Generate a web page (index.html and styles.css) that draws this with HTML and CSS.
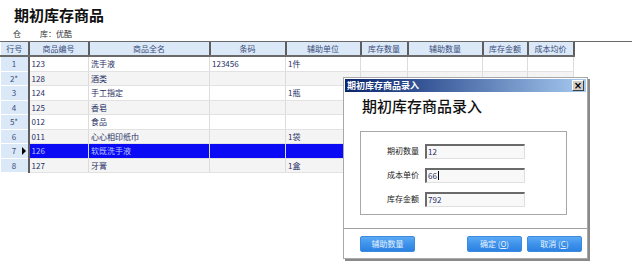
FILE: index.html
```html
<!DOCTYPE html>
<html>
<head>
<meta charset="utf-8">
<link rel="stylesheet" href="styles.css">
</head>
<body>
<div class="page">
  <h1 class="title">期初库存商品</h1>
  <div class="warehouse"><span class="wh-a">仓</span><span>库：优酷</span></div>
  <div class="grid-wrap">
    <table class="grid">
      <colgroup>
        <col style="width:28px"><col style="width:60px"><col style="width:121px"><col style="width:76px"><col style="width:75px"><col style="width:47px"><col style="width:75px"><col style="width:45px"><col style="width:46px">
      </colgroup>
      <thead>
        <tr><th>行号</th><th>商品编号</th><th>商品全名</th><th>条码</th><th>辅助单位</th><th>库存数量</th><th>辅助数量</th><th>库存金额</th><th>成本均价</th></tr>
      </thead>
      <tbody>
        <tr><td class="rn">1</td><td>123</td><td>洗手液</td><td>123456</td><td>1件</td><td></td><td></td><td></td><td></td></tr>
        <tr class="alt"><td class="rn">2*</td><td>128</td><td>酒类</td><td></td><td></td><td></td><td></td><td></td><td></td></tr>
        <tr><td class="rn">3</td><td>124</td><td>手工指定</td><td></td><td>1瓶</td><td></td><td></td><td></td><td></td></tr>
        <tr class="alt"><td class="rn">4</td><td>125</td><td>香皂</td><td></td><td></td><td></td><td></td><td></td><td></td></tr>
        <tr><td class="rn">5*</td><td>012</td><td>食品</td><td></td><td></td><td></td><td></td><td></td><td></td></tr>
        <tr class="alt"><td class="rn">6</td><td>011</td><td>心心相印纸巾</td><td></td><td>1袋</td><td></td><td></td><td></td><td></td></tr>
        <tr class="sel"><td class="rn"><span class="rn-num">7</span><span class="arrow"></span></td><td>126</td><td>软既洗手液</td><td></td><td></td><td></td><td></td><td></td><td></td></tr>
        <tr class="alt"><td class="rn">8</td><td>127</td><td>牙膏</td><td></td><td>1盒</td><td></td><td></td><td></td><td></td></tr>
      </tbody>
    </table>
  </div>
</div>

<div class="dialog">
  <div class="titlebar">
    <span class="tb-text">期初库存商品录入</span>
    <span class="close">×</span>
  </div>
  <div class="dlg-heading">期初库存商品录入</div>
  <div class="group">
    <div class="field"><label>期初数量</label><div class="input">12</div></div>
    <div class="field"><label>成本单价</label><div class="input">66<span class="caret"></span></div></div>
    <div class="field"><label>库存金额</label><div class="input">792</div></div>
  </div>
  <div class="sep"></div>
  <div class="footer">
    <button class="btn">辅助数量</button>
    <div class="right-btns">
      <button class="btn">确定 (<u>O</u>)</button>
      <button class="btn">取消 (<u>C</u>)</button>
    </div>
  </div>
</div>
</body>
</html>
```

FILE: styles.css
```css
html, body {
  margin: 0;
  padding: 0;
  background: #ffffff;
}
body {
  width: 632px;
  height: 272px;
  overflow: hidden;
  position: relative;
  font-family: "Noto Sans CJK SC", "Noto Sans", sans-serif;
  color: #1a1a1a;
}
.page {
  padding-top: 6px;
}
.title {
  margin: 0 0 0 14px;
  font-size: 15px;
  line-height: 17px;
  font-weight: bold;
  color: #111;
}
.warehouse {
  margin: 6px 0 0 13px;
  font-size: 8px;
  line-height: 10px;
  color: #333;
  display: flex;
}
.wh-a {
  width: 27px;
}
.grid-wrap {
  margin-top: 2px;
  border-top: 1px solid #6a6a6a;
}
.grid {
  border-collapse: collapse;
  table-layout: fixed;
  width: 573px;
  font-size: 8px;
}
.grid th {
  height: 13px;
  padding: 0;
  background: #dbe8f8;
  color: #3a4d78;
  font-weight: normal;
  text-align: center;
  border-right: 2px solid #5e5e5e;
  border-bottom: 2px solid #6a6a6a;
  border-left: 1px solid #ffffff;
  line-height: 13px;
  white-space: nowrap;
}
.grid td {
  height: 13.5px;
  padding: 0 0 0 2px;
  color: #1f2f63;
  border-right: 1px solid #dcdcdc;
  border-bottom: 1px solid #e2e2e2;
  white-space: nowrap;
  overflow: hidden;
  line-height: 13px;
  background: #ffffff;
}
.grid tr.alt td {
  background: #f4f4f4;
}
.grid td.rn {
  background: #dbe8f8;
  color: #3a4d78;
  text-align: center;
  padding: 0;
  border-right: 2px solid #5e5e5e;
  border-bottom: 1px solid #ffffff;
  position: relative;
}
.grid tr.alt td.rn {
  background: #dbe8f8;
}
.grid tr.sel td {
  background: #0a0af5;
  color: #b8c4ff;
}
.grid tr.sel td.rn {
  background: #dbe8f8;
  color: #3a4d78;
}
.arrow {
  position: absolute;
  right: 2px;
  top: 3px;
  width: 0;
  height: 0;
  border-top: 4px solid transparent;
  border-bottom: 4px solid transparent;
  border-left: 4px solid #000;
}

/* Dialog */
.dialog {
  position: absolute;
  left: 343px;
  top: 77px;
  width: 243px;
  height: 180px;
  background: #ffffff;
  border: 1px solid #a8a8a8;
  box-shadow: 2px 2px 0 #8a8a8a;
  display: flex;
  flex-direction: column;
}
.titlebar {
  margin: 1px 1px 0 1px;
  height: 13px;
  background: linear-gradient(to right, #0a246a 0%, #3a5a9a 35%, #a6caf0 100%);
  display: flex;
  align-items: center;
  justify-content: space-between;
  padding: 0 2px 0 2px;
}
.tb-text {
  color: #ffffff;
  font-size: 9px;
  font-weight: bold;
  line-height: 13px;
}
.close {
  width: 10px;
  height: 9px;
  background: #d4d0c8;
  border-top: 1px solid #ffffff;
  border-left: 1px solid #ffffff;
  border-right: 1px solid #404040;
  border-bottom: 1px solid #404040;
  font-size: 10px;
  line-height: 9px;
  text-align: center;
  font-weight: bold;
  color: #000;
  font-family: "DejaVu Sans", sans-serif;
}
.dlg-heading {
  margin: 5px 0 0 18px;
  font-size: 15px;
  line-height: 18px;
  color: #111;
  font-weight: 500;
}
.group {
  margin: 16px 20px 0 16px;
  height: 84px;
  border: 1px solid #a8a8a8;
  box-shadow: inset 1px 1px 0 #ffffff;
  display: flex;
  flex-direction: column;
  padding: 12px 0 0 26px;
  box-sizing: border-box;
  gap: 10px;
}
.field {
  display: flex;
  align-items: center;
  height: 14px;
}
.field label {
  width: 38px;
  font-size: 8px;
  color: #222;
  line-height: 14px;
}
.input {
  width: 96px;
  height: 12px;
  border-top: 2px solid #6a6a6a;
  border-left: 2px solid #6a6a6a;
  border-right: 1px solid #e0e0e0;
  border-bottom: 1px solid #e0e0e0;
  background: #f8f8f8;
  font-size: 8px;
  line-height: 12px;
  padding-left: 1px;
  color: #1f2f63;
  display: flex;
  align-items: center;
}
.caret {
  display: inline-block;
  width: 1px;
  height: 9px;
  background: #000;
  margin-left: 1px;
}
.sep {
  margin-top: 13px;
  border-top: 1px solid #a0a0a0;
  border-bottom: 1px solid #ffffff;
}
.footer {
  display: flex;
  justify-content: space-between;
  padding: 6px 5px 0 16px;
}
.right-btns {
  display: flex;
  gap: 5px;
}
.btn {
  width: 55px;
  height: 16px;
  padding: 0;
  border: 1px solid #3a8ae0;
  border-radius: 2px;
  background: linear-gradient(to bottom, #5aaaf5 0%, #3e92ea 50%, #2c82e2 100%);
  color: #e8f2ff;
  font-family: "Noto Sans CJK SC", sans-serif;
  font-size: 8px;
  line-height: 14px;
}
.btn u {
  text-decoration: underline;
}
```
